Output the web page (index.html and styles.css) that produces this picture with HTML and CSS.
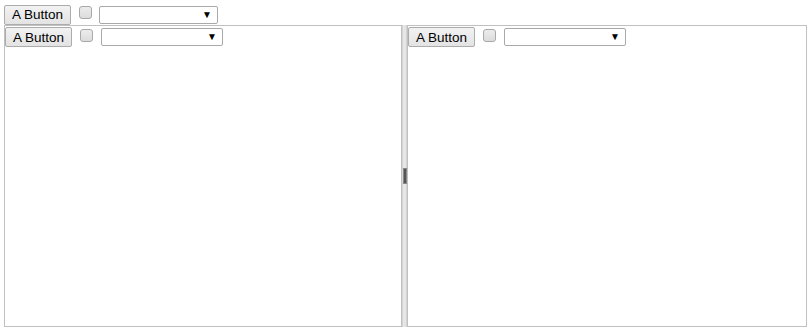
FILE: index.html
```html
<!DOCTYPE html>
<html>
<head>
<meta charset="utf-8">
<link rel="stylesheet" href="styles.css">
</head>
<body>
<div class="bar top">
  <button class="btn">A Button</button>
  <span class="chk"></span>
  <span class="sel"><span class="arrow">▼</span></span>
</div>
<div class="panes">
  <div class="pane left">
    <div class="bar">
      <button class="btn">A Button</button>
      <span class="chk"></span>
      <span class="sel wide"><span class="arrow">▼</span></span>
    </div>
  </div>
  <div class="split"><span class="grip"></span></div>
  <div class="pane right">
    <div class="bar">
      <button class="btn">A Button</button>
      <span class="chk"></span>
      <span class="sel wide"><span class="arrow">▼</span></span>
    </div>
  </div>
</div>
</body>
</html>
```
FILE: styles.css
```css
html, body { margin: 0; padding: 0; background: #fff; }
body { padding: 4px 0 0 4px; font-family: Arial, "Liberation Sans", sans-serif; font-size: 13px; }
.bar { display: flex; align-items: center; height: 21px; }
.btn {
  box-sizing: border-box;
  width: 67px; height: 20px;
  margin: 0; padding: 0;
  font-family: Arial, "Liberation Sans", sans-serif;
  font-size: 13.5px; color: #000;
  border: 1px solid #acacac; border-radius: 2px;
  background: linear-gradient(#f2f2f2, #e3e3e3);
}
.chk {
  box-sizing: border-box;
  width: 13px; height: 13px;
  margin-left: 8px; margin-top: -4px;
  border: 1px solid #a8a8a8; border-radius: 3px;
  background: linear-gradient(#ececec, #dcdcdc);
}
.sel {
  box-sizing: border-box;
  width: 119px; height: 18px;
  margin-left: 7px;
  border: 1px solid #a9a9a9; border-radius: 2px;
  background: #fff;
  display: flex; align-items: center; justify-content: flex-end;
  padding-right: 5px;
}
.sel.wide { width: 122px; margin-left: 8px; }
.arrow { font-size: 10px; color: #000; line-height: 1; }
.panes { display: flex; width: 803px; height: 302px; }
.pane {
  box-sizing: border-box;
  border: 1px solid #c0c0c0;
  background: #fff;
}
.pane.left { width: 398px; }
.pane.right { flex: 1; }
.pane .bar { height: 20px; margin-top: 1px; }
.split {
  box-sizing: border-box;
  width: 5px;
  background: #e6e6e6;
  border-left: 1px solid #d4d4d4;
  border-right: 1px solid #d4d4d4;
  display: flex; align-items: center; justify-content: center;
}
.grip { width: 4px; height: 16px; flex: none; background: #555; border: 1px solid #888; box-sizing: border-box; }
```
